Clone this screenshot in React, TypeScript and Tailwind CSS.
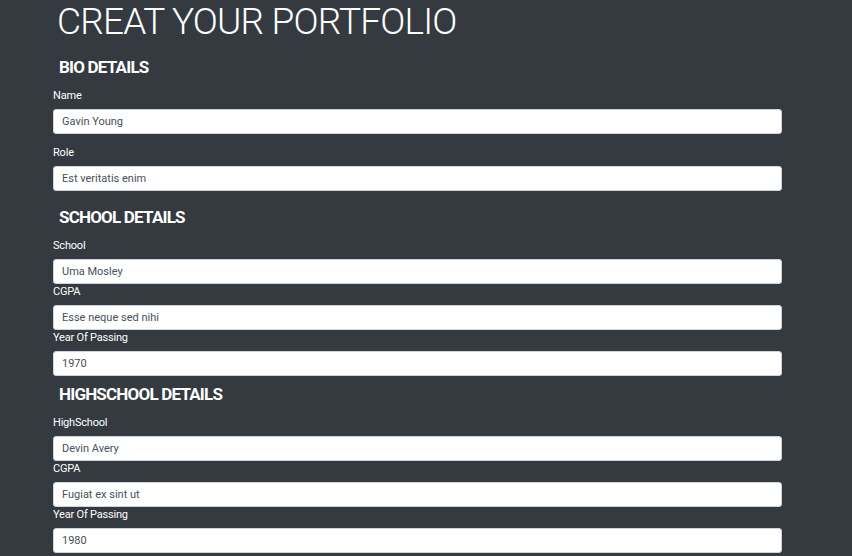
import React from 'react';

interface FieldProps {
  label: string;
  value: string;
  spaced?: boolean;
}

function Field({ label, value, spaced }: FieldProps) {
  return (
    <div className={spaced ? 'mb-[11px]' : ''}>
      <label className="block text-[11px] leading-[16px] tracking-[-0.2px] mb-[5px] text-white">{label}</label>
      <input
        className="block w-full h-[25px] px-2 text-[11px] text-[#495057] bg-white border border-[#ced4da] rounded-[3px] outline-none"
        defaultValue={value}
        readOnly
      />
    </div>
  );
}

function SectionTitle({ children }: { children: React.ReactNode }) {
  return (
    <h4 className="pl-[6px] pt-[3px] pb-[9px] text-[17px] leading-[24px] tracking-[-0.8px] font-bold text-white">{children}</h4>
  );
}

export default function App() {
  return (
    <div
      className="min-h-[556px] w-full bg-[#343a40] overflow-hidden"
      style={{ fontFamily: 'Roboto, "Open Sans", sans-serif' }}
    >
      <div className="ml-[53px] w-[729px]">
        <h1 className="text-[37px] leading-[44px] tracking-[-0.8px] font-light text-white mb-[8px] pl-[4px]">CREAT YOUR PORTFOLIO</h1>

        <SectionTitle>BIO DETAILS</SectionTitle>
        <Field label="Name" value="Gavin Young" spaced />
        <Field label="Role" value="Est veritatis enim" spaced />

        <SectionTitle>SCHOOL DETAILS</SectionTitle>
        <Field label="School" value="Uma Mosley" />
        <Field label="CGPA" value="Esse neque sed nihi" />
        <Field label="Year Of Passing" value="1970" />
        <div className="h-[3px]" />

        <SectionTitle>HIGHSCHOOL DETAILS</SectionTitle>
        <Field label="HighSchool" value="Devin Avery" />
        <Field label="CGPA" value="Fugiat ex sint ut" />
        <Field label="Year Of Passing" value="1980" />
      </div>
    </div>
  );
}
